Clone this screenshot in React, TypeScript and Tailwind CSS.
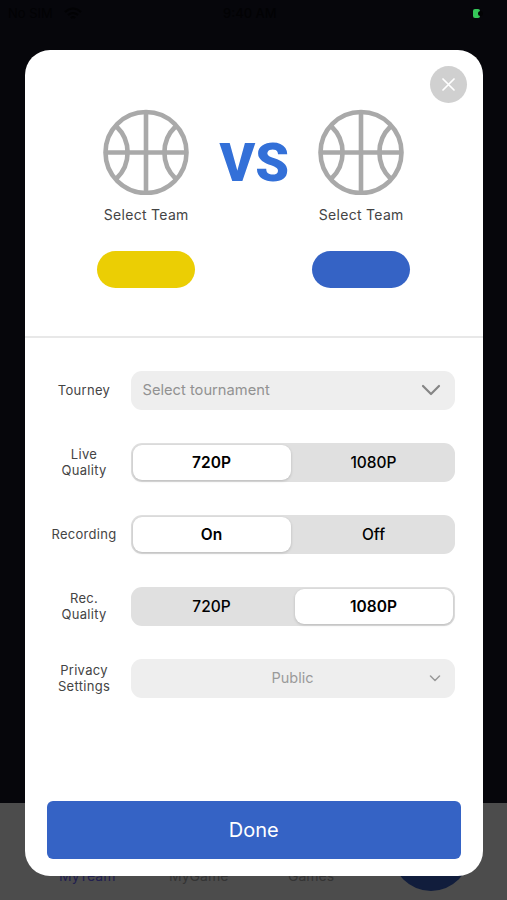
import React from 'react';

function Basketball() {
  return (
    <svg className="block size-[86px]" viewBox="0 0 86 86" fill="none" stroke="#a9a9a9" strokeWidth="4.600">
      <circle cx="43" cy="43.500" r="40.500" />
      <path d="M43 3V84M2.500 43.500H83.500M13.500 17.500A36 36 0 0 1 13.500 69.500M72.500 17.500A36 36 0 0 0 72.500 69.500" />
    </svg>
  );
}

function Team({ color }: { color: string }) {
  return (
    <div className="flex w-[98px] flex-col items-center">
      <Basketball />
      <span className="mt-[10px] text-[14px] leading-5 tracking-[0.3px] whitespace-nowrap text-[#444]">Select Team</span>
      <div className={`mt-[26px] h-[37px] w-[98px] rounded-full ${color}`} />
    </div>
  );
}

function Row({ label, children }: { label: React.ReactNode; children: React.ReactNode }) {
  return (
    <div className="flex h-[39px] items-center">
      <div className="mr-[7px] w-[79px] text-center text-[13px] leading-4 tracking-[0.3px] text-[#444]">{label}</div>
      <div className="h-[39px] w-[324px]">{children}</div>
    </div>
  );
}

function Segmented({ options, active }: { options: string[]; active: number }) {
  return (
    <div className="flex h-full justify-between rounded-[11px] bg-[#e0e0e0] p-[2px]">
      {options.map((option, i) => (
        <div
          key={option}
          className={`flex w-[158px] items-center justify-center rounded-[9px] pt-[2px] text-[15.500px] text-black ${
            i === active ? 'bg-white font-semibold shadow-[0_1px_3px_rgba(0,0,0,0.18)]' : 'font-medium'
          }`}
        >
          {option}
        </div>
      ))}
    </div>
  );
}

export default function App() {
  return (
    <div className="relative flex h-[900px] w-[507px] flex-col overflow-hidden bg-[#06060b] font-['Inter','Liberation_Sans',sans-serif]">
      <div className="flex h-[27px] items-center text-[13px] text-[#020204]">
        <span className="ml-[8px] w-[56px]">No SIM</span>
        <svg className="h-[13px] w-[18px]" viewBox="0 0 18 13" fill="none" stroke="currentColor" strokeWidth="2">
          <path d="M1 5Q9-2 17 5M4 8Q9 4 14 8M7 11Q9 9 11 11" />
        </svg>
        <span className="ml-[141px] w-[70px] font-medium">9:40 AM</span>
        <div className="ml-auto mr-[21px] flex h-[10px] w-[13px] items-center">
          <div className="h-[9px] w-[7px] rounded-[2px] bg-[#35c759]" />
          <div className="-ml-[2px] size-[5px] rounded-full bg-[#030305]" />
        </div>
      </div>
      <div className="mt-auto flex h-[97px] items-end bg-[#4c4c4c] pb-[16px] text-[14px] leading-4 text-[#343434]">
        <span className="ml-[59px] w-[110px] text-[#22204f]">MyTeam</span>
        <span className="w-[119px]">MyGame</span>
        <span className="w-[104px]">Games</span>
        <div className="-mb-[7px] size-[78px] rounded-full bg-[#111d3c]" />
      </div>

      <div className="absolute top-[50px] left-[25px] flex h-[826px] w-[457.500px] flex-col rounded-[25px] bg-white">
        <button className="absolute top-[15.500px] right-[16px] flex size-[37px] items-center justify-center rounded-full bg-[#d0d0d0]">
          <svg className="size-[13px]" viewBox="0 0 13 13" fill="none" stroke="white" strokeWidth="1.700" strokeLinecap="round">
            <path d="M1 1L12 12M12 1L1 12" />
          </svg>
        </button>
        <div className="flex h-[286px] justify-center pt-[59px]">
          <Team color="bg-[#ebce04]" />
          <div className="mt-[18px] w-[117px] pl-[1px] text-center font-['Roboto'] text-[54px] leading-[72px] font-black text-[#3370d8]">VS</div>
          <Team color="bg-[#3563c5]" />
        </div>
        <div className="h-[2px] bg-[#e8e8e8]" />
        <div className="mt-[32.500px] ml-[19.500px] flex flex-col gap-[33px]">
          <Row label="Tourney">
            <div className="flex h-full items-center justify-between rounded-[11px] bg-[#eee] pr-[14px] pl-[12px] text-[14.700px] text-[#929292]">
              <span className="pt-px">Select tournament</span>
              <svg className="h-[12px] w-[20px]" viewBox="0 0 20 12" fill="none" stroke="#858585" strokeWidth="2.200" strokeLinecap="round" strokeLinejoin="round">
                <path d="M2 2L10 10L18 2" />
              </svg>
            </div>
          </Row>
          <Row label={<>Live<br />Quality</>}><Segmented options={['720P', '1080P']} active={0} /></Row>
          <Row label="Recording"><Segmented options={['On', 'Off']} active={0} /></Row>
          <Row label={<>Rec.<br />Quality</>}><Segmented options={['720P', '1080P']} active={1} /></Row>
          <Row label={<>Privacy<br />Settings</>}>
            <div className="flex h-full items-center rounded-[11px] bg-[#eee] pr-[14px] pl-[26px] text-[14.500px] text-[#9a9a9a]">
              <span className="flex-1 text-center">Public</span>
              <svg className="mt-px h-[7px] w-[12px]" viewBox="0 0 12 7" fill="none" stroke="#999" strokeWidth="1.500" strokeLinecap="round" strokeLinejoin="round">
                <path d="M1.500 1L6 5.500L10.500 1" />
              </svg>
            </div>
          </Row>
        </div>
        <button className="mx-[22px] mt-auto mb-[17.500px] h-[58px] rounded-[6px] bg-[#3563c5] text-[20px] text-white">Done</button>
      </div>
    </div>
  );
}
